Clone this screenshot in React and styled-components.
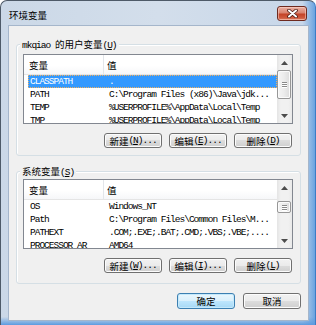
import React from 'react'
import styled, { createGlobalStyle } from 'styled-components'

const GlobalStyle = createGlobalStyle`
  html, body {
    margin: 0;
    padding: 0;
    background: #fff;
  }
  body {
    width: 316px;
    height: 325px;
    overflow: hidden;
    font-family: "Liberation Mono", "Noto Sans CJK SC", monospace;
    font-size: 9.5px;
    letter-spacing: -1px;
    color: #000;
  }
`

const userVars = [
  { name: 'CLASSPATH', value: '.', selected: true },
  { name: 'PATH', value: 'C:\\Program Files (x86)\\Java\\jdk...' },
  { name: 'TEMP', value: '%USERPROFILE%\\AppData\\Local\\Temp' },
  { name: 'TMP', value: '%USERPROFILE%\\AppData\\Local\\Temp' },
]

const sysVars = [
  { name: 'OS', value: 'Windows_NT' },
  { name: 'Path', value: 'C:\\Program Files\\Common Files\\M...' },
  { name: 'PATHEXT', value: '.COM;.EXE;.BAT;.CMD;.VBS;.VBE;....' },
  { name: 'PROCESSOR_AR', value: 'AMD64' },
]

const HAN = /([\u4e00-\u9fff]+|&.)/

// splits a caption into CJK runs, latin runs and the &-marked access key
function Label({ text }) {
  return text
    .split(HAN)
    .filter(Boolean)
    .map((part, i) => {
      if (part[0] === '&') return <Key key={i}>{part[1]}</Key>
      if (/[\u4e00-\u9fff]/.test(part)) return <Han key={i}>{part}</Han>
      return <span key={i}>{part}</span>
    })
}

function Arrow({ down }) {
  return (
    <svg width="7" height="4" viewBox="0 0 7 4">
      <path d={down ? 'M0 0 L7 0 L3.5 4Z' : 'M0 4 L3.5 0 L7 4Z'} fill="#4d4d4d" />
    </svg>
  )
}

function VarList({ rows, thumbTop, thumbHeight, top }) {
  return (
    <List $top={top}>
      <ListMain>
        <Header>
          <HeadName>
            <Label text="变量" />
          </HeadName>
          <HeadValue>
            <Label text="值" />
          </HeadValue>
        </Header>
        {rows.map(r => (
          <Row key={r.name} $selected={r.selected}>
            <NameCell>{r.name}</NameCell>
            <ValueCell>{r.value}</ValueCell>
          </Row>
        ))}
      </ListMain>
      <ScrollBar>
        <ScrollArrow>
          <Arrow />
        </ScrollArrow>
        <Track>
          <Thumb style={{ marginTop: thumbTop, height: thumbHeight }}>
            <Grip />
            <Grip />
            <Grip />
          </Thumb>
        </Track>
        <ScrollArrow>
          <Arrow down />
        </ScrollArrow>
      </ScrollBar>
    </List>
  )
}

function GroupButtons({ keys }) {
  return (
    <ButtonRow>
      <Button>
        <Label text={`新建(&${keys[0]})...`} />
      </Button>
      <Button>
        <Label text={`编辑(&${keys[1]})...`} />
      </Button>
      <Button>
        <Label text={`删除(&${keys[2]})`} />
      </Button>
    </ButtonRow>
  )
}

export default function App() {
  return (
    <>
      <GlobalStyle />
      <Window>
        <TitleBar>
          <Title>环境变量</Title>
          <CloseButton>
            <svg width="11" height="9" viewBox="0 0 11 9">
              <path d="M2 1.5 L9 7.5 M9 1.5 L2 7.5" stroke="#4b1a12" strokeWidth="3.6" strokeLinecap="round" />
              <path d="M2 1.5 L9 7.5 M9 1.5 L2 7.5" stroke="#fff" strokeWidth="2" strokeLinecap="round" />
            </svg>
          </CloseButton>
        </TitleBar>
        <Content>
          <Group $top={18} $bottom={7}>
            <GroupTitle>
              <Label text="mkqiao 的用户变量(&U)" />
            </GroupTitle>
            <VarList rows={userVars} top={4} thumbTop={0} thumbHeight={29} />
            <GroupButtons keys={['N', 'E', 'D']} />
          </Group>
          <Group $top={15} $bottom={10}>
            <GroupTitle>
              <Label text="系统变量(&S)" />
            </GroupTitle>
            <VarList rows={sysVars} top={2} thumbTop={6} thumbHeight={12} />
            <GroupButtons keys={['W', 'I', 'L']} />
          </Group>
          <Footer>
            <Button $default $h={16}>
              <Label text="确定" />
            </Button>
            <Button $h={16}>
              <Label text="取消" />
            </Button>
          </Footer>
        </Content>
      </Window>
    </>
  )
}

const Han = styled.span`
  font-family: "Noto Sans CJK SC", sans-serif;
  font-size: 9.5px;
  letter-spacing: 0;
`

const Key = styled.span`
  text-decoration: underline;
`

const Window = styled.div`
  width: 316px;
  height: 325px;
  box-sizing: border-box;
  display: flex;
  flex-direction: column;
  padding: 0 6px 4px 7px;
  border: 1px solid #4e5a68;
  border-bottom: none;
  border-right-color: #3d7cc4;
  border-radius: 7px 7px 0 0;
  background:
    linear-gradient(to bottom, rgba(90, 155, 224, 0) 97.5%, #5b9be0 100%),
    linear-gradient(to right, #cbd8e7 0%, #d3deeb 50%, #c8d7e9 96%, #6aa3e0 100%);
`

const TitleBar = styled.div`
  height: 24px;
  display: flex;
  justify-content: space-between;
  align-items: flex-start;
`

const Title = styled.div`
  font-family: "Noto Sans CJK SC", sans-serif;
  font-size: 9.5px;
  letter-spacing: 0;
  line-height: 14px;
  margin: 7px 0 0 1px;
  color: #000;
`

const CloseButton = styled.div`
  width: 30px;
  height: 15px;
  box-sizing: border-box;
  margin: 5px 2px 0 0;
  border: 1px solid #6e2a1f;
  border-radius: 3px;
  display: flex;
  align-items: center;
  justify-content: center;
  background: linear-gradient(#eab0a3 0%, #d9836f 45%, #c44327 55%, #cf5b3f 85%, #e0876c 100%);
  box-shadow: inset 0 0 0 1px rgba(255, 220, 210, 0.5);
`

const Content = styled.div`
  flex: 1;
  display: flex;
  flex-direction: column;
  padding: 0 7px;
  background: #f0f0f0;
  border: 1px solid #a5b6cb;
`

const Group = styled.div`
  margin-top: ${p => p.$top}px;
  padding: 0 7px ${p => p.$bottom}px 6px;
  display: flex;
  flex-direction: column;
  border: 1px solid #d5dfe5;
  border-radius: 3px;
  box-shadow: inset 1px 1px 0 #fff;
`

const GroupTitle = styled.div`
  align-self: flex-start;
  margin: -7px 0 0 -3px;
  padding: 0 2px;
  height: 12px;
  line-height: 12px;
  background: #f0f0f0;
  white-space: pre;
`

const List = styled.div`
  margin-top: ${p => p.$top}px;
  height: 70px;
  box-sizing: border-box;
  display: flex;
  border: 1px solid #828790;
  background: #fff;
  overflow: hidden;
`

const ListMain = styled.div`
  flex: 1;
  display: flex;
  flex-direction: column;
  overflow: hidden;
`

const Header = styled.div`
  height: 20px;
  flex-shrink: 0;
  box-sizing: border-box;
  display: flex;
  align-items: center;
  background: linear-gradient(#ffffff 0%, #ffffff 55%, #f6f7f9 100%);
  border-bottom: 1px solid #e5e5e5;
`

const HeadName = styled.div`
  width: 80px;
  height: 100%;
  box-sizing: border-box;
  padding-left: 5px;
  display: flex;
  align-items: center;
  border-right: 1px solid #e3e6ea;
`

const HeadValue = styled.div`
  padding-left: 3px;
`

const Row = styled.div`
  height: 13px;
  flex-shrink: 0;
  margin-left: 4px;
  box-sizing: border-box;
  display: flex;
  align-items: center;
  white-space: pre;
  color: ${p => (p.$selected ? '#fff' : '#000')};
  background: ${p => (p.$selected ? '#3399ff' : 'transparent')};
  outline: ${p => (p.$selected ? '1px dotted #f0b060' : 'none')};
  outline-offset: -1px;
`

const NameCell = styled.div`
  width: 75px;
  padding-left: 2px;
  box-sizing: border-box;
  overflow: hidden;
`

const ValueCell = styled.div`
  padding-left: 6px;
`

const ScrollBar = styled.div`
  width: 15px;
  flex-shrink: 0;
  display: flex;
  flex-direction: column;
  background: linear-gradient(to right, #e4e4e4 0%, #f1f1f1 25%, #f1f1f1 75%, #e9e9e9 100%);
`

const ScrollArrow = styled.div`
  height: 15px;
  flex-shrink: 0;
  display: flex;
  align-items: center;
  justify-content: center;
`

const Track = styled.div`
  flex: 1;
  display: flex;
  flex-direction: column;
`

const Thumb = styled.div`
  margin: 0 1px 0 0;
  box-sizing: border-box;
  border: 1px solid #979797;
  border-radius: 2px;
  display: flex;
  flex-direction: column;
  align-items: center;
  justify-content: center;
  gap: 1px;
  background: linear-gradient(to right, #f5f5f5 0%, #ececec 50%, #dcdcdc 100%);
  box-shadow: inset 0 0 0 1px #fbfbfb;
`

const Grip = styled.div`
  width: 5px;
  height: 1px;
  background: #8a8a8a;
  box-shadow: 0 1px 0 #fff;
`

const ButtonRow = styled.div`
  margin: 9px 1px 0 0;
  display: flex;
  justify-content: flex-end;
  gap: 7px;
`

const Footer = styled.div`
  margin-top: 9px;
  display: flex;
  justify-content: flex-end;
  gap: 8px;
`

const Button = styled.button`
  width: 58px;
  height: ${p => p.$h || 15}px;
  box-sizing: border-box;
  padding: 0;
  display: flex;
  align-items: center;
  justify-content: center;
  white-space: pre;
  font-family: "Liberation Mono", monospace;
  font-size: 9.5px;
  letter-spacing: -1px;
  color: #000;
  border: 1px solid ${p => (p.$default ? '#3c7fb1' : '#707070')};
  border-radius: 3px;
  background: ${p =>
    p.$default
      ? 'linear-gradient(#eaf6fd 0%, #d9f0fc 50%, #bee6fd 50%, #a7d9f5 100%)'
      : 'linear-gradient(#f2f2f2 0%, #ebebeb 50%, #dddddd 50%, #cfcfcf 100%)'};
  box-shadow: inset 0 0 0 1px ${p => (p.$default ? '#c5e9fb' : '#fcfcfc')};
`
